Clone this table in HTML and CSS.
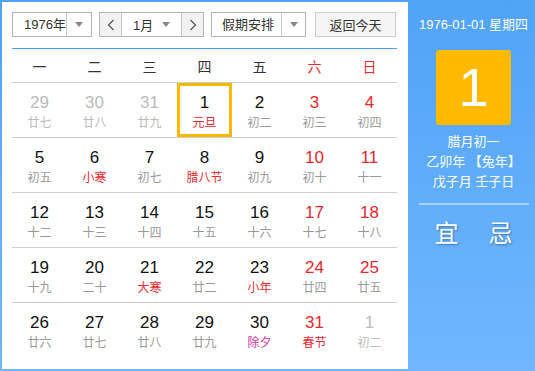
FILE: index.html
```html
<!DOCTYPE html>
<html lang="zh-CN">
<head>
<meta charset="utf-8">
<link rel="stylesheet" href="styles.css">
</head>
<body>
<div class="app">
  <div class="main">
    <div class="toolbar">
      <div class="select year"><span class="label">1976年</span><span class="caret"></span></div>
      <div class="month-group">
        <span class="nav"><svg width="8" height="12" viewBox="0 0 8 12"><path d="M6.5 1 L1.5 6 L6.5 11" fill="none" stroke="#555" stroke-width="1.2"/></svg></span>
        <span class="month"><span class="label">1月</span><span class="caret-in"></span></span>
        <span class="nav"><svg width="8" height="12" viewBox="0 0 8 12"><path d="M1.5 1 L6.5 6 L1.5 11" fill="none" stroke="#555" stroke-width="1.2"/></svg></span>
      </div>
      <div class="select holiday"><span class="label">假期安排</span><span class="caret"></span></div>
      <button class="today">返回今天</button>
    </div>
    <div class="calendar">
      <div class="week">
        <span>一</span><span>二</span><span>三</span><span>四</span><span>五</span><span class="red">六</span><span class="red">日</span>
      </div>
      <div class="days">
        <div class="day other"><b>29</b><i>廿七</i></div>
        <div class="day other"><b>30</b><i>廿八</i></div>
        <div class="day other"><b>31</b><i>廿九</i></div>
        <div class="day selected"><b>1</b><i class="fest">元旦</i></div>
        <div class="day"><b>2</b><i>初二</i></div>
        <div class="day wkend"><b>3</b><i>初三</i></div>
        <div class="day wkend"><b>4</b><i>初四</i></div>

        <div class="day"><b>5</b><i>初五</i></div>
        <div class="day"><b>6</b><i class="fest">小寒</i></div>
        <div class="day"><b>7</b><i>初七</i></div>
        <div class="day"><b>8</b><i class="fest">腊八节</i></div>
        <div class="day"><b>9</b><i>初九</i></div>
        <div class="day wkend"><b>10</b><i>初十</i></div>
        <div class="day wkend"><b>11</b><i>十一</i></div>

        <div class="day"><b>12</b><i>十二</i></div>
        <div class="day"><b>13</b><i>十三</i></div>
        <div class="day"><b>14</b><i>十四</i></div>
        <div class="day"><b>15</b><i>十五</i></div>
        <div class="day"><b>16</b><i>十六</i></div>
        <div class="day wkend"><b>17</b><i>十七</i></div>
        <div class="day wkend"><b>18</b><i>十八</i></div>

        <div class="day"><b>19</b><i>十九</i></div>
        <div class="day"><b>20</b><i>二十</i></div>
        <div class="day"><b>21</b><i class="fest">大寒</i></div>
        <div class="day"><b>22</b><i>廿二</i></div>
        <div class="day"><b>23</b><i class="fest">小年</i></div>
        <div class="day wkend"><b>24</b><i>廿四</i></div>
        <div class="day wkend"><b>25</b><i>廿五</i></div>

        <div class="day last"><b>26</b><i>廿六</i></div>
        <div class="day last"><b>27</b><i>廿七</i></div>
        <div class="day last"><b>28</b><i>廿八</i></div>
        <div class="day last"><b>29</b><i>廿九</i></div>
        <div class="day last"><b>30</b><i class="eve">除夕</i></div>
        <div class="day last wkend"><b>31</b><i class="fest">春节</i></div>
        <div class="day last other"><b>1</b><i>初二</i></div>
      </div>
    </div>
  </div>
  <div class="side">
    <div class="side-date">1976-01-01 星期四</div>
    <div class="big-day">1</div>
    <div class="lunar">
      <div>腊月初一</div>
      <div>乙卯年 【兔年】</div>
      <div>戊子月 壬子日</div>
    </div>
    <div class="side-line"></div>
    <div class="yiji"><span>宜</span><span>忌</span></div>
  </div>
</div>
</body>
</html>
```

FILE: styles.css
```css
* { box-sizing: border-box; }
html, body { margin: 0; padding: 0; }
body {
  font-family: "Liberation Sans", "Noto Sans CJK SC", sans-serif;
  background: #fff;
}
.app {
  width: 535px;
  height: 371px;
  display: flex;
  padding: 2px 0 2px 2px;
  background: linear-gradient(#50a3f6, #70b7ff);
}
.main {
  width: 406px;
  height: 367px;
  background: #fff;
  padding: 10px 11px 0 10px;
}
.toolbar {
  display: flex;
  height: 25px;
  font-size: 13px;
  color: #333;
  white-space: nowrap;
}
.select {
  display: flex;
  border: 1px solid #b5b5b5;
  height: 25px;
  background: #fff;
}
.select .label {
  display: flex;
  align-items: center;
  padding-left: 11px;
  border-right: 1px solid #c8c8c8;
  line-height: 23px;
}
.caret {
  display: flex;
  align-items: center;
  justify-content: center;
}
.caret::after, .caret-in::after {
  content: "";
  border-left: 4px solid transparent;
  border-right: 4px solid transparent;
  border-top: 5px solid #888;
}
.year { width: 80px; }
.year .label { width: 55px; }
.year .caret { width: 24px; }
.holiday { width: 95px; margin-left: 7px; }
.holiday .label { width: 71px; padding-left: 10px; }
.holiday .caret { width: 23px; }
.month-group {
  display: flex;
  margin-left: 7px;
  width: 105px;
  height: 25px;
  border: 1px solid #b5b5b5;
}
.nav {
  width: 22px;
  background: #f2f2f2;
  display: flex;
  align-items: center;
  justify-content: center;
}
.nav:first-child { border-right: 1px solid #c8c8c8; }
.nav:last-child { border-left: 1px solid #c8c8c8; }
.month {
  flex: 1;
  display: flex;
  align-items: center;
  padding-left: 11px;
}
.month .label { flex: 1; }
.caret-in { width: 19px; display: flex; align-items: center; }
.today {
  margin-left: 9px;
  width: 81px;
  height: 25px;
  border: 1px solid #ccc;
  background: #f5f5f5;
  font-family: inherit;
  font-size: 13px;
  color: #333;
  padding: 0;
}
.calendar {
  margin-top: 11px;
  border-top: 1px solid #4ea0f5;
  width: 385px;
}
.week {
  display: grid;
  grid-template-columns: repeat(7, 55px);
  height: 34px;
  border-bottom: 1px solid #cfcfcf;
  font-size: 14px;
  color: #333;
  align-items: center;
  text-align: center;
}
.red { color: #e8282d; }
.days {
  display: grid;
  grid-template-columns: repeat(7, 55px);
  grid-auto-rows: 55px;
}
.day {
  border-bottom: 1px solid #cfcfcf;
  text-align: center;
  padding-top: 9px;
  display: flex;
  flex-direction: column;
  align-items: center;
}
.day.last { border-bottom: none; }
.day b {
  font-weight: normal;
  font-size: 17px;
  line-height: 22px;
  color: #111;
}
.day i {
  font-style: normal;
  font-size: 12px;
  line-height: 18px;
  color: #999;
}
.day.wkend b { color: #e8282d; }
.day.other b { color: #bbb; }
.day.other i { color: #bbb; }
.day i.fest { color: #e8282d; }
.day i.eve { color: #d6339b; }
.day.selected {
  box-shadow: inset 0 0 0 3px #ffb800;
}
.side {
  width: 127px;
  padding-left: 4px;
  display: flex;
  flex-direction: column;
  align-items: center;
  color: #fff;
}
.side-date {
  font-size: 13px;
  margin-top: 15px;
  line-height: 16px;
}
.big-day {
  margin-top: 17px;
  width: 75px;
  height: 75px;
  border-radius: 3px;
  background: #ffba00;
  font-size: 54px;
  line-height: 75px;
  text-align: center;
  font-family: "Liberation Sans", sans-serif;
  font-weight: normal;
}
.lunar {
  margin-top: 7px;
  font-size: 13px;
  line-height: 20px;
  text-align: center;
}
.side-line {
  margin-top: 11px;
  width: 110px;
  height: 2px;
  background: #a9d1fb;
}
.yiji {
  margin-top: 15px;
  display: flex;
  gap: 30px;
  font-size: 24px;
  line-height: 28px;
  text-shadow: 1px 1px 2px rgba(0,0,0,0.35);
}
```
